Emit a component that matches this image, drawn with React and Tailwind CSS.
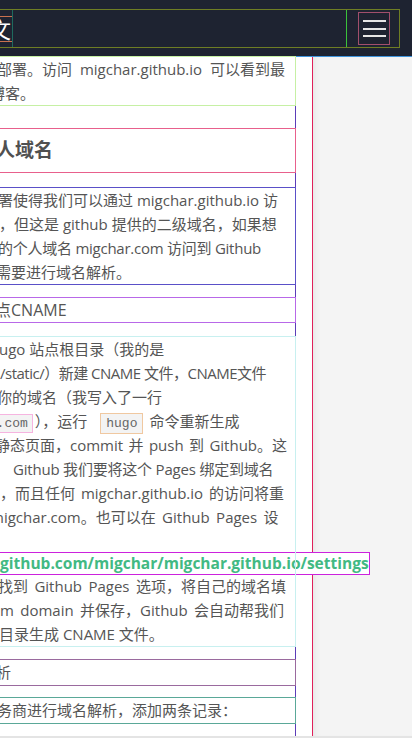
import React from 'react'

const font = { fontFamily: '"Open Sans", "Noto Sans CJK SC", sans-serif' }
const mono = { fontFamily: '"Liberation Mono", monospace' }

function Line({ className = '', children }) {
  return <div className={`whitespace-nowrap h-[24px] leading-[24px] ${className}`}>{children}</div>
}

export default function App() {
  return (
    <div className="w-[412px] h-[738px] overflow-hidden bg-[#f4f4f4] text-[#555]" style={font}>
      {/* Top bar */}
      <header className="h-[57px] bg-[#1e2331] border-b border-[#3f94dc] pt-[10px] overflow-hidden">
        <div className="ml-[-40px] w-[439px] h-[37px] outline outline-[#6e7d24] flex items-stretch justify-between">
          <div className="w-[52px] outline outline-[#1f6a5e] flex items-center justify-end">
            <span className="h-[26px] w-[46px] border-y border-[#c8704e] flex items-center justify-end text-white text-[22px] leading-none pr-[1px]">
              文
            </span>
          </div>
          <div className="w-[52px] outline outline-[#3bc23b] flex items-center justify-end pr-[10px]">
            <button className="w-[30px] h-[31px] outline outline-[#a24f6c] flex flex-col items-center justify-center gap-[5.5px]">
              <span className="block w-[23px] h-[2px] bg-[#e6e6e6]" />
              <span className="block w-[23px] h-[2px] bg-[#e6e6e6]" />
              <span className="block w-[23px] h-[2px] bg-[#e6e6e6]" />
            </button>
          </div>
        </div>
      </header>

      <div className="flex h-[679px]">
        {/* Article column */}
        <div className="relative z-10 w-[296px] shrink-0 bg-white border-r border-[#5b3cb8] text-[15px]">
          <div className="outline outline-[#c6f0a4]">
            <Line className="ml-[-3px] [word-spacing:4px]">部署。访问 migchar.github.io 可以看到最</Line>
            <Line className="ml-[-10px]">博客。</Line>
          </div>

          <h2 className="mt-[24px] h-[43px] flex items-center outline outline-[#e8608c] text-[19px] font-bold text-[#505050] whitespace-nowrap">
            <span className="ml-[-4px]">人域名</span>
          </h2>

          <div className="mt-[16px] outline outline-[#5a50c8]">
            <Line className="ml-[-2px]">署使得我们可以通过 migchar.github.io 访</Line>
            <Line className="ml-[-1px]">，但这是 github 提供的二级域名，如果想</Line>
            <Line className="ml-[-2px] tracking-[-0.25px]">的个人域名 migchar.com 访问到 Github</Line>
            <Line className="ml-[-4px]">需要进行域名解析。</Line>
          </div>

          <h3 className="mt-[14px] h-[24px] flex items-center outline outline-[#b868e8] text-[16px] whitespace-nowrap">
            <span className="ml-[-5px]">点CNAME</span>
          </h3>

          <div className="mt-[15px] outline outline-[#c8f0f0]">
            <Line className="ml-[-1px]">ugo 站点根目录（我的是</Line>
            <Line className="tracking-[-0.5px]">/static/）新建 CNAME 文件，CNAME文件</Line>
            <Line className="ml-[-3px]">你的域名（我写入了一行</Line>
            <Line className="ml-[-62px]">
              <code className="mr-[3px] px-[4px] py-[1px] bg-[#f3f3f3] text-[#666] text-[13px] outline outline-[#f6b4e0]" style={mono}>
                migchar.com
              </code>
              ），运行{' '}
              <code className="ml-[10px] mr-[3px] px-[5px] py-[2px] bg-[#f3f3f3] text-[#666] text-[13px] outline outline-[#f0c8a0]" style={mono}>
                hugo
              </code>{' '}
              命令重新生成
            </Line>
            <Line className="ml-[-5px] [word-spacing:1.5px]">静态页面，commit 并 push 到 Github。这</Line>
            <Line className="pl-[13px] tracking-[-0.2px]">Github 我们要将这个 Pages 绑定到域名</Line>
            <Line className="[word-spacing:2px]">，而且任何 migchar.github.io 的访问将重</Line>
            <Line className="ml-[-10px] [word-spacing:2.5px]">migchar.com。也可以在 Github Pages 设</Line>
            <Line />
            <div className="h-[21px] whitespace-nowrap flex items-center">
              <a className="bg-white outline outline-[#cc22dd] font-bold text-[#42b983] text-[15.5px] leading-[21px]">
                github.com/migchar/migchar.github.io/settings
              </a>
            </div>
            <Line className="ml-[-2px] [word-spacing:2.5px]">找到 Github Pages 选项，将自己的域名填</Line>
            <Line className="[word-spacing:2.5px]">m domain 并保存，Github 会自动帮我们</Line>
            <Line className="ml-[-1px]">目录生成 CNAME 文件。</Line>
          </div>

          <h4 className="mt-[14px] h-[25px] flex items-center outline outline-[#9a6a9e] text-[15px] whitespace-nowrap">
            <span className="ml-[-4px]">析</span>
          </h4>

          <div className="mt-[13px] h-[25px] outline outline-[#5aa898]">
            <Line className="ml-[-3px]">务商进行域名解析，添加两条记录：</Line>
          </div>
        </div>

        {/* Gutter */}
        <div className="w-[17px] shrink-0 bg-white border-r border-[#e0205a]" />

        {/* Sidebar background */}
        <div className="flex-1 bg-[#f4f4f4] shadow-[inset_6px_0_6px_-4px_rgba(0,0,0,0.06)]" />
      </div>

      <div className="h-[2px] bg-[#e4e4e4]" />
    </div>
  )
}
